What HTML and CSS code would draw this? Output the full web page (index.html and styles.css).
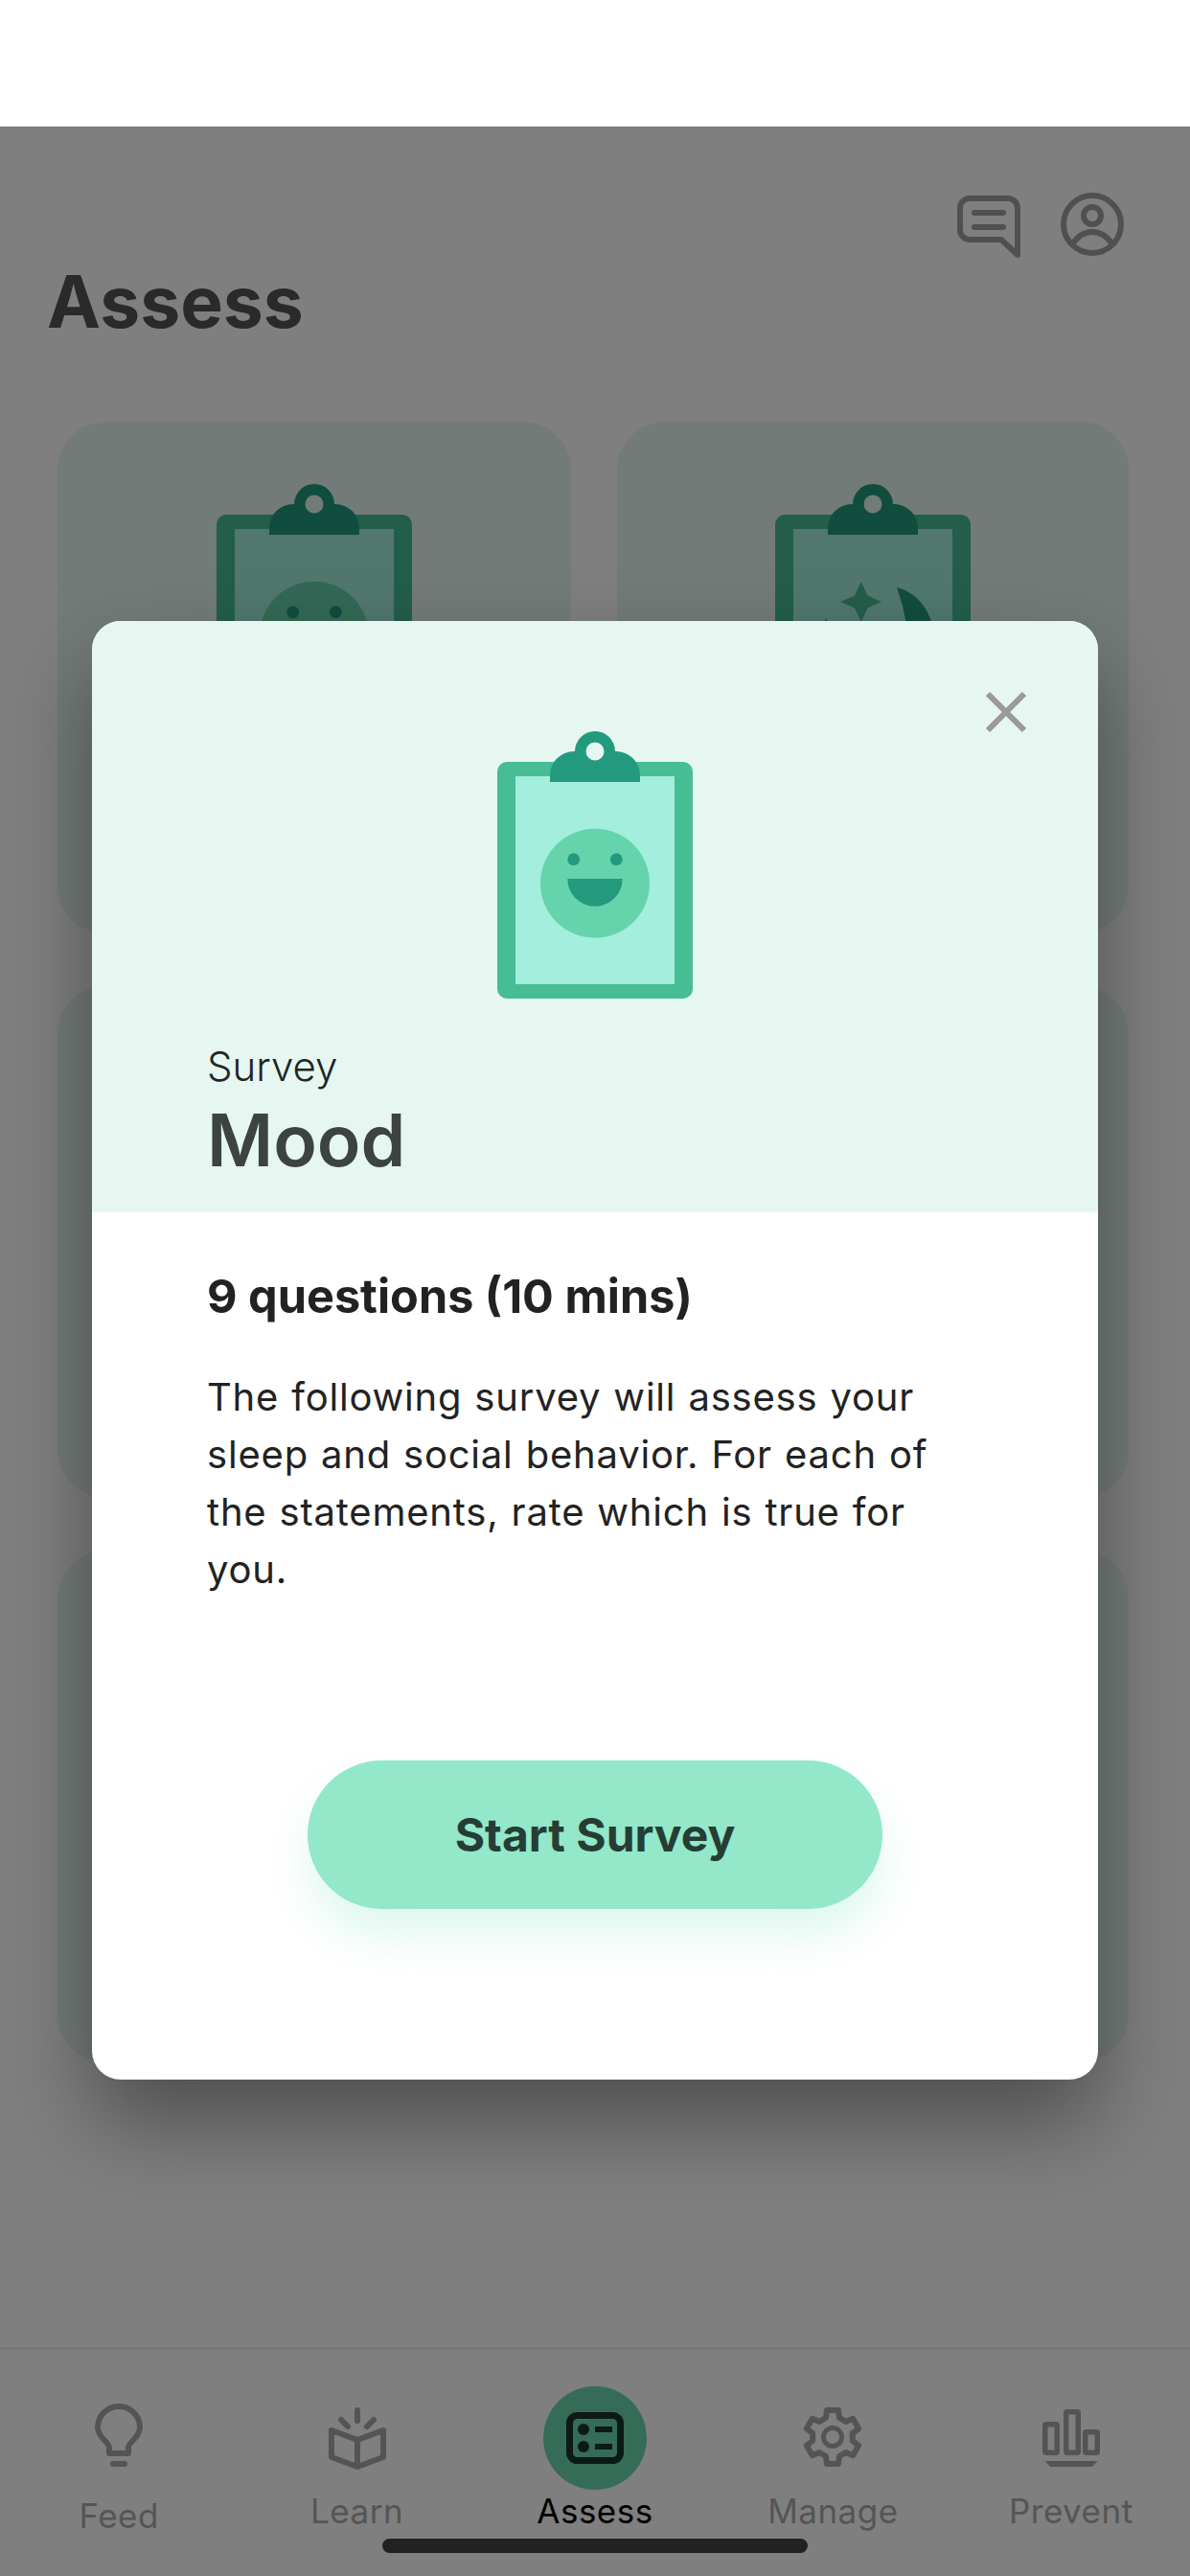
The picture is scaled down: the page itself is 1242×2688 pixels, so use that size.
FILE: index.html
```html
<!DOCTYPE html>
<html>
<head>
    <title>Assess</title>
    <link rel="stylesheet" href="styles.css">
</head>
<body>
    <svg class="defs" width="0" height="0">
        <symbol id="board" viewBox="0 0 204 280">
            <rect y="32" width="204" height="247" rx="10" fill="#47bd95"/>
            <rect x="19" y="47" width="166" height="217" fill="#a3eedd"/>
            <path fill="#239a7e" fill-rule="evenodd" d="M55 53V46a25 25 0 0 1 25-25h1a21 21 0 0 1 42 0h1a25 25 0 0 1 25 25v7zM92.500 21a9.500 9.500 0 1 0 19 0a9.500 9.500 0 1 0-19 0z"/>
        </symbol>
        <symbol id="smile" viewBox="0 0 204 280">
            <use href="#board"/>
            <circle cx="102" cy="158.700" r="57" fill="#65d3ab"/>
            <circle cx="79.700" cy="133.700" r="6.400" fill="#239a7e"/>
            <circle cx="124.300" cy="133.700" r="6.400" fill="#239a7e"/>
            <path fill="#239a7e" d="M73.300 154h57.400a28.700 28.700 0 0 1-57.400 0z"/>
        </symbol>
        <symbol id="night" viewBox="0 0 204 280">
            <use href="#board"/>
            <path fill="#47bd95" d="M89.700 101.700L96.500 116.500L111 123L96.500 129.500L89.700 144.500L83 129.500L68 123L83 116.500z"/>
            <path fill="#47bd95" d="M53 139L58 155L72 160L58 165L53 181L48 165L34 160L48 155z"/>
            <path fill="#239a7e" d="M127 108C145 112 160 128 165 150C170 180 150 205 125 205C140 190 145 160 127 108z"/>
        </symbol>
    </svg>

    <div class="status-bar"></div>

    <div class="screen">
        <div class="top-icons">
            <svg class="chat-icon" viewBox="0 0 66 65"><path d="M13 3H53a10 10 0 0 1 10 10V62L46 46H13a10 10 0 0 1-10-10V13a10 10 0 0 1 10-10z"/><path d="M18 18H48M18 33H48"/></svg>
            <svg class="user-icon" viewBox="0 0 66 66"><circle cx="33" cy="33" r="30"/><circle cx="33" cy="24" r="9"/><path d="M12 54C18 45 25 41 33 41S48 45 54 54"/></svg>
        </div>
        <h1 class="page-title">Assess</h1>

        <div class="cards">
            <div class="card"><svg class="card-art"><use href="#smile"/></svg></div>
            <div class="card"><svg class="card-art"><use href="#night"/></svg></div>
            <div class="card"></div>
            <div class="card"></div>
            <div class="card"></div>
            <div class="card"></div>
        </div>

        <nav class="tabs">
            <div class="tab">
                <svg class="tab-icon" viewBox="0 0 66 66"><path d="M23 52V46C23 40 11 36 11 25A22 22 0 0 1 55 25C55 36 43 40 43 46V52z"/><path d="M27 63H39"/></svg>
                <span class="tab-label feed-label">Feed</span>
            </div>
            <div class="tab">
                <svg class="tab-icon" viewBox="0 0 66 66"><path d="M33 66L6 56V28L33 38L60 28V56zM33 38V66"/><path d="M33 7V18M16 17L23 24M50 17L43 24"/></svg>
                <span class="tab-label">Learn</span>
            </div>
            <div class="tab active">
                <span class="tab-circle">
                    <svg class="tab-icon" viewBox="0 0 60 54"><rect x="3.500" y="3.500" width="53" height="47" rx="8"/><path class="lines" d="M30 18H48M30 36H48"/><circle class="dot" cx="18" cy="18" r="6"/><circle class="dot" cx="18" cy="36" r="6"/></svg>
                </span>
                <span class="tab-label">Assess</span>
            </div>
            <div class="tab">
                <svg class="tab-icon gear-icon" viewBox="0 0 66 66"><path d="M27 7H39L40 15L46.800 18.900L54.200 15.800L60.200 26.200L53.800 31.100V38.900L60.200 43.800L54.200 54.200L46.800 51.100L40 55L39 63H27L26 55L19.200 51.100L11.800 54.200L5.800 43.800L12.200 38.900V31.100L5.800 26.200L11.800 15.800L19.200 18.900L26 15z"/><circle cx="33" cy="35" r="9.500"/></svg>
                <span class="tab-label">Manage</span>
            </div>
            <div class="tab">
                <svg class="tab-icon bars-icon" viewBox="0 0 60 66"><rect x="2.750" y="21.750" width="12.500" height="29.500" rx="1"/><rect x="24.750" y="8.750" width="12.500" height="42.500" rx="1"/><rect x="44.750" y="29.750" width="12.500" height="21.500" rx="1"/><path class="base" d="M2.500 60H57.500L52 66H8z"/></svg>
                <span class="tab-label">Prevent</span>
            </div>
        </nav>

        <div class="overlay">
            <div class="modal">
                <div class="modal-head">
                    <svg class="close-icon" viewBox="0 0 42 42"><path d="M2 2L40 40M40 2L2 40"/></svg>
                    <svg class="modal-art"><use href="#smile"/></svg>
                    <div class="modal-kicker">Survey</div>
                    <div class="modal-title">Mood</div>
                </div>
                <div class="modal-body">
                    <h2 class="modal-count">9 questions (10 mins)</h2>
                    <p class="modal-text">The following survey will assess your sleep and social behavior. For each of the statements, rate which is true for you.</p>
                    <button class="start-btn">Start Survey</button>
                </div>
            </div>
        </div>

        <div class="home-bar"></div>
    </div>
</body>
</html>
```

FILE: styles.css
```css
* {
    box-sizing: border-box;
}

body {
    margin: 0;
    width: 1242px;
    height: 2688px;
    overflow: hidden;
    background-color: #fff;
    font-family: Inter, "Liberation Sans", sans-serif;
    display: flex;
    flex-direction: column;
}

.defs {
    position: absolute;
}

.status-bar {
    height: 132px;
}

.screen {
    position: relative;
    flex: 1;
    display: flex;
    flex-direction: column;
}

.top-icons {
    display: flex;
    justify-content: flex-end;
    align-items: flex-start;
    gap: 42px;
    padding: 69px 69px 0 0;
}

.top-icons svg {
    fill: none;
    stroke: #a0a0a0;
    stroke-width: 6;
    stroke-linecap: round;
    stroke-linejoin: round;
}

.chat-icon {
    width: 66px;
    height: 65px;
    margin-top: 3px;
}

.user-icon {
    width: 66px;
    height: 66px;
}

.page-title {
    margin: 1px 0 0 49px;
    font-size: 75px;
    line-height: 90px;
    font-weight: 700;
    color: #555;
}

.cards {
    display: grid;
    grid-template-columns: 536px 534px;
    grid-auto-rows: 534px;
    column-gap: 48px;
    row-gap: 55px;
    padding: 0 0 0 60px;
    margin-top: 80px;
}

.card {
    display: flex;
    justify-content: center;
    padding-top: 65px;
    background-color: #e6f6f0;
    border-radius: 50px;
}

.card-art {
    width: 204px;
    height: 280px;
}

.tabs {
    margin-top: auto;
    height: 239px;
    display: grid;
    grid-template-columns: repeat(5, 1fr);
    border-top: 3px solid #eee;
}

.tab {
    position: relative;
    display: flex;
    flex-direction: column;
    align-items: center;
    padding-top: 56px;
}

.tab-icon {
    width: 66px;
    height: 66px;
    overflow: visible;
    fill: none;
    stroke: #a8a8a8;
    stroke-width: 6;
    stroke-linecap: round;
    stroke-linejoin: round;
}

.gear-icon circle {
    stroke-width: 5;
}

.bars-icon {
    stroke-width: 5.500;
    stroke-linecap: butt;
}

.tab-label {
    margin-top: 24px;
    font-size: 35px;
    line-height: 44px;
    letter-spacing: 0.5px;
    color: #aaa;
}

.feed-label {
    margin-top: 29px;
}

.tab-circle {
    width: 108px;
    height: 108px;
    margin-top: -18px;
    margin-bottom: -24px;
    display: flex;
    align-items: center;
    justify-content: center;
    border-radius: 50%;
    background-color: #6ad8b0;
}

.active .tab-icon {
    width: 60px;
    height: 54px;
    stroke: #18342c;
    stroke-width: 7;
}

.active .lines {
    stroke-width: 6;
    stroke-linecap: butt;
}

.active .dot {
    fill: #18342c;
    stroke: none;
}

.active .tab-label {
    color: #000;
}

.base {
    fill: #a8a8a8;
    stroke: none;
}

.overlay {
    position: absolute;
    inset: 0;
    display: flex;
    justify-content: center;
    padding-top: 516px;
    background-color: rgba(0, 0, 0, 0.5);
}

.modal {
    width: 1050px;
    height: 1522px;
    display: flex;
    flex-direction: column;
    overflow: hidden;
    background-color: #fff;
    border-radius: 30px;
    box-shadow: 0 45px 90px rgba(0, 0, 0, 0.38);
}

.modal-head {
    position: relative;
    height: 617px;
    padding: 115px 0 0 120px;
    background-color: #e6f7f1;
}

.close-icon {
    position: absolute;
    top: 74px;
    right: 75px;
    width: 42px;
    height: 42px;
    fill: none;
    stroke: #9a9a9a;
    stroke-width: 6;
}

.modal-art {
    display: block;
    width: 204px;
    height: 280px;
    margin-left: 303px;
}

.modal-kicker {
    margin-top: 45px;
    font-size: 42px;
    line-height: 50px;
    font-weight: 300;
    color: #1f2624;
}

.modal-title {
    margin-top: 9px;
    font-size: 75px;
    line-height: 86px;
    font-weight: 600;
    color: #3c4341;
}

.modal-body {
    flex: 1;
    display: flex;
    flex-direction: column;
    padding: 58px 120px 0;
}

.modal-count {
    margin: 0;
    font-size: 48.600px;
    line-height: 60px;
    font-weight: 700;
    color: #222;
}

.modal-text {
    margin: 45px 0 0;
    font-size: 40px;
    line-height: 60px;
    letter-spacing: 0.8px;
    word-spacing: 1px;
    color: #222;
}

.start-btn {
    align-self: center;
    width: 600px;
    height: 155px;
    margin-top: 169px;
    border: 0;
    border-radius: 78px;
    background-color: #92e8c9;
    box-shadow: 0 28px 44px rgba(146, 232, 201, 0.3);
    font-family: inherit;
    font-size: 48px;
    font-weight: 700;
    color: #263d35;
}

.home-bar {
    position: absolute;
    left: 399px;
    bottom: 24px;
    width: 444px;
    height: 15px;
    border-radius: 8px;
    background-color: #222;
}
```
